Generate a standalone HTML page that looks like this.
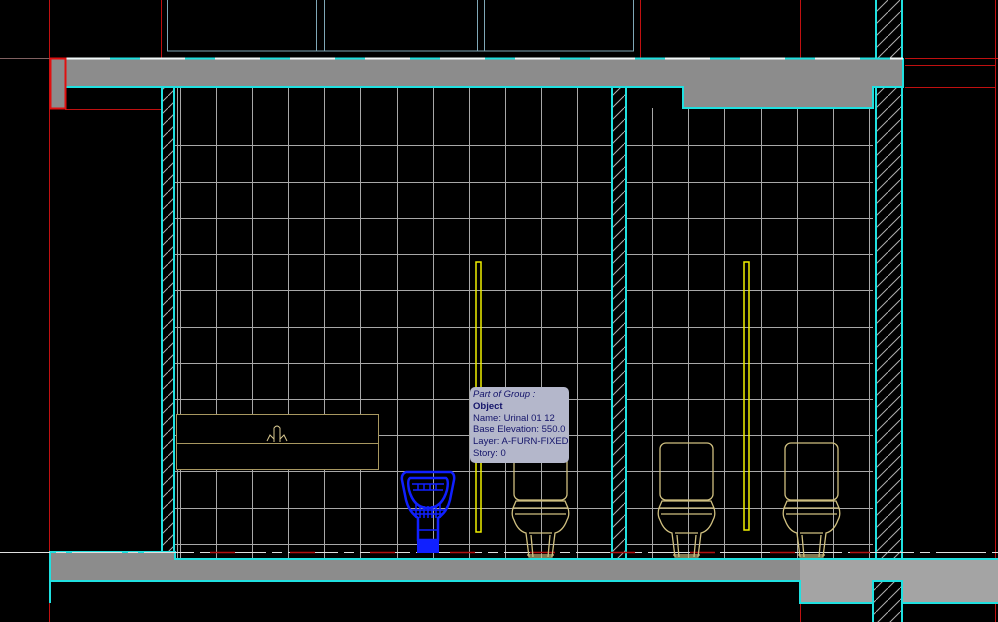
<!DOCTYPE html>
<html><head><meta charset="utf-8"><style>
html,body{margin:0;padding:0;background:#000;width:998px;height:622px;overflow:hidden}
svg{display:block}
.tip{position:absolute;left:470px;top:387px;width:99px;height:76px;background:#b4b7cb;border-radius:5px;font-family:"Liberation Sans",sans-serif;font-size:9.5px;line-height:11.8px;color:#14146a;padding:2px 0 0 3px;box-sizing:border-box;white-space:nowrap}
</style></head><body>
<svg width="998" height="622" viewBox="0 0 998 622" xmlns="http://www.w3.org/2000/svg">
<defs>
<pattern id="h" width="12" height="12" patternUnits="userSpaceOnUse"><path d="M0 12 L12 0" stroke="#b0b0b0" stroke-width="1"/></pattern>
<g id="toilet" fill="none" stroke="#d0c080" stroke-width="1.3">
<rect x="1" y="0" width="53" height="57" rx="6"/>
<path d="M3 58 L52 58 L55 65 Q57 72 54 77 Q50 88 42 90 L39 114 L16 114 L13 90 Q5 88 1 77 Q-2 72 0 65 Z"/>
<path d="M0 65 L55 65 M2 71 L53 71 M16 90 L39 90 M18 92 L20 114 M37 92 L35 114 M14 112 L41 112"/>
</g>
</defs>
<g stroke="#7fa7b6" fill="none" stroke-width="1">
<rect x="167.5" y="-2" width="466" height="53"/>
<line x1="316.5" y1="0" x2="316.5" y2="51"/><line x1="324.5" y1="0" x2="324.5" y2="51"/>
<line x1="477.5" y1="0" x2="477.5" y2="51"/><line x1="484.5" y1="0" x2="484.5" y2="51"/>
</g>
<g stroke="#c01010" stroke-width="1">
<line x1="49.5" y1="0" x2="49.5" y2="622"/>
<line x1="161.5" y1="0" x2="161.5" y2="58"/>
<line x1="640.5" y1="0" x2="640.5" y2="58"/>
<line x1="800.5" y1="0" x2="800.5" y2="58"/>
<line x1="65" y1="109.5" x2="161" y2="109.5"/>
<line x1="905" y1="58.5" x2="998" y2="58.5"/>
<line x1="905" y1="65.5" x2="995" y2="65.5"/>
<line x1="905" y1="87.5" x2="995" y2="87.5"/>
<line x1="995.5" y1="0" x2="995.5" y2="622"/>
<line x1="0" y1="58.5" x2="50" y2="58.5" stroke="#806060"/>
<line x1="800.5" y1="603" x2="800.5" y2="622"/>
</g>
<g stroke="#a8a8a8" stroke-width="1">
<line x1="180.5" y1="87" x2="180.5" y2="559"/>
<line x1="216.5" y1="87" x2="216.5" y2="559"/><line x1="252.5" y1="87" x2="252.5" y2="559"/>
<line x1="288.5" y1="87" x2="288.5" y2="559"/><line x1="324.5" y1="87" x2="324.5" y2="559"/>
<line x1="360.5" y1="87" x2="360.5" y2="559"/><line x1="397.5" y1="87" x2="397.5" y2="559"/>
<line x1="433.5" y1="87" x2="433.5" y2="559"/><line x1="469.5" y1="87" x2="469.5" y2="559"/>
<line x1="505.5" y1="87" x2="505.5" y2="559"/><line x1="541.5" y1="87" x2="541.5" y2="559"/>
<line x1="577.5" y1="87" x2="577.5" y2="559"/>
<line x1="652.5" y1="108" x2="652.5" y2="559"/><line x1="688.5" y1="108" x2="688.5" y2="559"/>
<line x1="724.5" y1="108" x2="724.5" y2="559"/><line x1="761.5" y1="108" x2="761.5" y2="559"/>
<line x1="797.5" y1="108" x2="797.5" y2="559"/><line x1="833.5" y1="108" x2="833.5" y2="559"/>
<line x1="869.5" y1="108" x2="869.5" y2="559"/>
<g>
<line x1="175" y1="145.5" x2="612" y2="145.5"/><line x1="175" y1="182.5" x2="612" y2="182.5"/>
<line x1="175" y1="218.5" x2="612" y2="218.5"/><line x1="175" y1="254.5" x2="612" y2="254.5"/>
<line x1="175" y1="290.5" x2="612" y2="290.5"/><line x1="175" y1="327.5" x2="612" y2="327.5"/>
<line x1="175" y1="363.5" x2="612" y2="363.5"/><line x1="175" y1="399.5" x2="612" y2="399.5"/>
<line x1="175" y1="435.5" x2="612" y2="435.5"/><line x1="175" y1="471.5" x2="612" y2="471.5"/>
<line x1="175" y1="508.5" x2="612" y2="508.5"/><line x1="175" y1="544.5" x2="612" y2="544.5"/>
<line x1="626" y1="145.5" x2="873" y2="145.5"/><line x1="626" y1="182.5" x2="873" y2="182.5"/>
<line x1="626" y1="218.5" x2="873" y2="218.5"/><line x1="626" y1="254.5" x2="873" y2="254.5"/>
<line x1="626" y1="290.5" x2="873" y2="290.5"/><line x1="626" y1="327.5" x2="873" y2="327.5"/>
<line x1="626" y1="363.5" x2="873" y2="363.5"/><line x1="626" y1="399.5" x2="873" y2="399.5"/>
<line x1="626" y1="435.5" x2="873" y2="435.5"/><line x1="626" y1="471.5" x2="873" y2="471.5"/>
<line x1="626" y1="508.5" x2="873" y2="508.5"/><line x1="626" y1="544.5" x2="873" y2="544.5"/>
</g>
</g>
<rect x="161" y="87" width="12" height="465" fill="url(#h)"/>
<rect x="612" y="87" width="14" height="472" fill="url(#h)"/>
<rect x="876" y="0" width="26" height="58" fill="url(#h)"/>
<rect x="876" y="87" width="26" height="472" fill="url(#h)"/>
<rect x="873" y="581" width="29" height="41" fill="url(#h)"/>
<g stroke="#20e0e0" stroke-width="2" fill="none">
<line x1="162" y1="87" x2="162" y2="552"/><line x1="174" y1="87" x2="174" y2="559"/>
<line x1="612" y1="87" x2="612" y2="559"/><line x1="626" y1="87" x2="626" y2="559"/>
<line x1="876" y1="0" x2="876" y2="58"/><line x1="902" y1="0" x2="902" y2="58"/>
<line x1="876" y1="87" x2="876" y2="559"/><line x1="902" y1="87" x2="902" y2="559"/>
<line x1="873" y1="581" x2="873" y2="622"/><line x1="902" y1="581" x2="902" y2="622"/>
</g>
<line x1="177.5" y1="87" x2="177.5" y2="559" stroke="#a8a8a8"/>
<path d="M50 58 L903 58 L903 87 L873 87 L873 108 L683 108 L683 87 L65 87 L65 58 Z" fill="#8c8c8c"/>
<path d="M65 87 L683 87 L683 108 L873 108 L873 87 L903 87 L903 58" stroke="#20e0e0" stroke-width="2" fill="none"/>
<line x1="65" y1="58.5" x2="903" y2="58.5" stroke="#20e0e0" stroke-width="2"/>
<line x1="65" y1="58.5" x2="903" y2="58.5" stroke="#f0f8f8" stroke-width="2" stroke-dasharray="45 30"/>
<rect x="50.5" y="58.5" width="15" height="50" fill="#8c8c8c" stroke="#e01010" stroke-width="2"/>
<path d="M50 552 L175 552 L175 559 L800 559 L800 581 L50 581 Z" fill="#8c8c8c"/>
<path d="M800 559 L998 559 L998 603 L902 603 L902 581 L873 581 L873 603 L800 603 Z" fill="#a4a4a4"/>
<path d="M50 603 L50 552 L175 552 L175 559 L998 559 M50 581 L800 581 L800 603 L873 603 L873 581 L902 581 L902 603 L998 603" stroke="#20e0e0" stroke-width="2" fill="none"/>
<line x1="0" y1="552.5" x2="998" y2="552.5" stroke="#e0e0e0" stroke-width="1" stroke-dasharray="50 6 10 6"/>
<line x1="200" y1="552.5" x2="870" y2="552.5" stroke="#b01010" stroke-width="1.5" stroke-dasharray="25 55" stroke-dashoffset="-10"/>
<g stroke="#a89860" fill="none" stroke-width="1">
<rect x="176.5" y="414.5" width="202" height="55" fill="#000"/>
<line x1="176" y1="443.5" x2="378" y2="443.5"/>
<path d="M274 442 L274 428 Q277 424 280 428 L280 442 M267 441 l3 -6 l4 4 M287 441 l-3 -6 l-4 4" stroke="#d8c890"/>
</g>
<rect x="476" y="262" width="5" height="270" fill="none" stroke="#f0f000" stroke-width="1.5"/>
<rect x="744" y="262" width="5" height="268" fill="none" stroke="#f0f000" stroke-width="1.5"/>
<g stroke="#1020ff" fill="none" stroke-width="2.5">
<path d="M406 472 L451 472 Q455 474 454 480 L450 500 Q447 512 438 518 L438 540 L418 540 L418 518 Q409 512 406 500 L402 480 Q401 474 406 472 Z"/>
<path d="M410 478 L446 478 Q449 480 447 490 Q442 508 428 508 Q414 508 409 490 Q407 480 410 478Z"/>
</g>
<g stroke="#1020ff" stroke-width="1.5" fill="none">
<path d="M412 484 L444 484 M413 490 L443 490 M411 510 L445 510 M413 514 L443 514 M418 484 L418 490 M424 484 L424 490 M430 484 L430 490 M436 484 L436 490 M416 504 L416 518 M420 506 L420 518 M424 506 L424 518 M428 506 L428 518 M432 506 L432 518 M436 506 L436 518 M440 504 L440 518 M418 530 L438 530"/>
</g>
<rect x="417" y="540" width="22" height="13" fill="#1020ff"/>
<use href="#toilet" x="513" y="443"/>
<use href="#toilet" x="659" y="443"/>
<use href="#toilet" x="784" y="443"/>
</svg>
<div class="tip"><i>Part of Group :</i><br><b>Object</b><br>Name: Urinal 01 12<br>Base Elevation: 550.0<br>Layer: A-FURN-FIXED<br>Story: 0</div>
</body></html>
